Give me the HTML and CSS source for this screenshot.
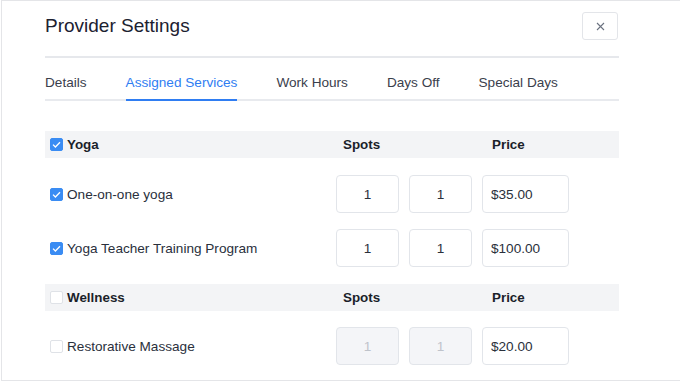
FILE: index.html
```html
<!DOCTYPE html>
<html>
<head>
<meta charset="utf-8">
<link rel="stylesheet" href="styles.css">
</head>
<body>
<div class="frame">
  <div class="panel">
    <div class="header">
      <h1 class="title">Provider Settings</h1>
      <button class="close" aria-label="Close">
        <svg width="9" height="9" viewBox="0 0 9 9"><path d="M1 1 L8 8 M8 1 L1 8" stroke="#6b7280" stroke-width="1.1" fill="none"/></svg>
      </button>
    </div>
    <nav class="tabs">
      <span class="tab">Details</span>
      <span class="tab active">Assigned Services</span>
      <span class="tab">Work Hours</span>
      <span class="tab">Days Off</span>
      <span class="tab">Special Days</span>
    </nav>

    <div class="table">
      <div class="group">
        <div class="row head">
          <label class="name"><span class="cb on"><svg width="9" height="7" viewBox="0 0 9 7"><path d="M1 3.6 L3.4 6 L8 1.2" stroke="#fff" stroke-width="1.3" fill="none"/></svg></span>Yoga</label>
          <span class="hspots">Spots</span>
          <span class="hprice">Price</span>
        </div>
        <div class="row item">
          <label class="name"><span class="cb on"><svg width="9" height="7" viewBox="0 0 9 7"><path d="M1 3.6 L3.4 6 L8 1.2" stroke="#fff" stroke-width="1.3" fill="none"/></svg></span>One-on-one yoga</label>
          <span class="inp num">1</span>
          <span class="inp num">1</span>
          <span class="inp price">$35.00</span>
        </div>
        <div class="row item">
          <label class="name"><span class="cb on"><svg width="9" height="7" viewBox="0 0 9 7"><path d="M1 3.6 L3.4 6 L8 1.2" stroke="#fff" stroke-width="1.3" fill="none"/></svg></span>Yoga Teacher Training Program</label>
          <span class="inp num">1</span>
          <span class="inp num">1</span>
          <span class="inp price">$100.00</span>
        </div>
      </div>
      <div class="group">
        <div class="row head">
          <label class="name"><span class="cb"></span>Wellness</label>
          <span class="hspots">Spots</span>
          <span class="hprice">Price</span>
        </div>
        <div class="row item">
          <label class="name"><span class="cb"></span>Restorative Massage</label>
          <span class="inp num disabled">1</span>
          <span class="inp num disabled">1</span>
          <span class="inp price">$20.00</span>
        </div>
      </div>
    </div>
  </div>
</div>
</body>
</html>
```

FILE: styles.css
```css
html, body {
  margin: 0;
  padding: 0;
  background: #fff;
  overflow: hidden;
}
body {
  font-family: "Liberation Sans", Arial, sans-serif;
  color: #1f2430;
}
.frame {
  margin-left: 1px;
  height: 379px;
  border: 1px solid #e4e5e8;
  border-right: none;
  overflow: hidden;
}
.panel {
  width: 574px;
  margin-left: 43px;
}
.header {
  display: flex;
  align-items: center;
  justify-content: space-between;
  padding: 11px 0 16px 0;
  border-bottom: 2px solid #e6e8ec;
}
.title {
  margin: 0;
  font-weight: 400;
  font-size: 19px;
  line-height: 28px;
  color: #1c2130;
}
.close {
  width: 36px;
  height: 28px;
  margin-right: 1px;
  border: 1px solid #e3e5e9;
  border-radius: 3px;
  background: #fff;
  display: flex;
  align-items: center;
  justify-content: center;
  padding: 0;
}
.tabs {
  display: flex;
  gap: 39px;
  border-bottom: 2px solid #e8eaee;
}
.tab {
  font-size: 13.6px;
  line-height: 16px;
  padding: 17px 0 8px;
  color: #3a404c;
  border-bottom: 2px solid transparent;
  margin-bottom: -2px;
}
.tab.active {
  color: #2f7df2;
  border-bottom-color: #2f7df2;
}
.table {
  margin-top: 30px;
}
.group + .group {
  margin-top: 9px;
}
.row {
  display: grid;
  grid-template-columns: 281px 63px 63px 87px 1fr;
  column-gap: 10px;
  align-items: center;
}
.head {
  height: 27px;
  background: #f3f4f6;
  font-weight: 700;
  font-size: 13.4px;
  color: #1b1f2a;
  margin-bottom: 9px;
}
.name {
  display: flex;
  align-items: center;
  gap: 4px;
  padding-left: 5px;
}
.item .name {
  font-size: 13.6px;
  color: #2a303c;
}
.hspots {
  grid-column: 2 / 4;
  padding-left: 7px;
}
.hprice {
  grid-column: 4;
  padding-left: 10px;
}
.item {
  padding: 8px 0;
}
.group + .group .item {
  padding-top: 7px;
}
.cb {
  width: 13px;
  height: 13px;
  box-sizing: border-box;
  border: 1px solid #dfe2e7;
  border-radius: 2px;
  background: #fff;
  display: inline-flex;
  align-items: center;
  justify-content: center;
  flex: none;
}
.cb.on {
  background: #3a8cf3;
  border-color: #3a8cf3;
}
.inp {
  height: 38px;
  box-sizing: border-box;
  border: 1px solid #e2e5ea;
  border-radius: 4px;
  background: #fff;
  display: flex;
  align-items: center;
  font-size: 13.6px;
  color: #2a303c;
}
.inp.num {
  justify-content: center;
}
.inp.price {
  padding-left: 8px;
}
.inp.disabled {
  background: #f4f5f8;
  color: #bfc3cb;
}
```
